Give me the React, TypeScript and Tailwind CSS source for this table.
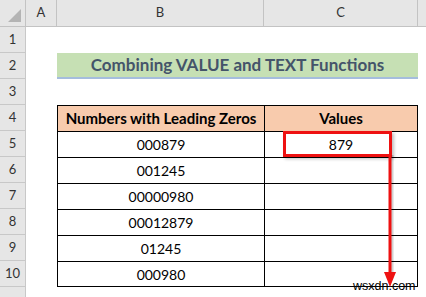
import React from "react";

const rows = [1, 2, 3, 4, 5, 6, 7, 8, 9, 10, 11];
const data = ["000879", "001245", "00000980", "00012879", "01245", "000980"];

export default function App() {
  const font = { fontFamily: "Lato, 'Open Sans', sans-serif" };
  return (
    <div className="relative w-[426px] h-[297px] overflow-hidden bg-white" style={font}>
      <div className="grid grid-cols-[26px_31px_207px_154px_8px] grid-rows-[27px_repeat(11,26px)]">
        {/* header row */}
        <div className="relative bg-[#e6e6e6] border-r border-b border-[#c3c3c3]">
          <div className="absolute right-[4px] bottom-[4px] w-0 h-0 border-l-[13px] border-l-transparent border-b-[13px] border-b-[#b4b4b4]" />
        </div>
        <div className="bg-[#e6e6e6] border-r border-b border-[#c3c3c3] flex items-center justify-center text-[13px] text-[#333]">A</div>
        <div className="bg-[#e6e6e6] border-r border-b border-[#c3c3c3] flex items-center justify-center text-[13px] text-[#333]">B</div>
        <div className="bg-[#e6e6e6] border-r border-b border-[#c3c3c3] flex items-center justify-center text-[13px] text-[#333]">C</div>
        <div className="bg-[#e6e6e6] border-b border-[#c3c3c3]" />

        {rows.map((r) => {
          const rh = (
            <div key={`h${r}`} className="bg-[#e6e6e6] border-r border-b border-[#c8c8c8] flex items-center justify-center text-[13px] text-[#333]">
              {r <= 10 ? r : ""}
            </div>
          );
          const a = <div key={`a${r}`} />;
          const d = <div key={`d${r}`} />;
          let b: React.ReactNode;
          let c: React.ReactNode;
          if (r === 2) {
            b = (
              <div key="title" className="col-span-2 bg-[#c6e0b4] border-b-2 border-[#a5bddd] flex items-center justify-center text-[17px] font-bold text-[#44546a]">
                Combining VALUE and TEXT Functions
              </div>
            );
            c = null;
          } else if (r === 4) {
            b = (
              <div key="b4" className="bg-[#f8cbad] border-l border-t border-black flex items-center justify-center text-[15px] font-bold text-black">
                Numbers with Leading Zeros
              </div>
            );
            c = (
              <div key="c4" className="bg-[#f8cbad] border-l border-t border-r border-black flex items-center justify-center text-[15px] font-bold text-black">
                Values
              </div>
            );
          } else if (r >= 5 && r <= 10) {
            const last = r === 10 ? " border-b" : "";
            b = (
              <div key={`b${r}`} className={"border-l border-t border-black flex items-center justify-center text-[14px] text-black" + last}>
                {data[r - 5]}
              </div>
            );
            c = (
              <div key={`c${r}`} className={"border-l border-t border-r border-black flex items-center justify-center text-[14px] text-black" + last}>
                {r === 5 ? "879" : ""}
              </div>
            );
          } else {
            b = <div key={`b${r}`} />;
            c = <div key={`c${r}`} />;
          }
          return (
            <React.Fragment key={r}>
              {rh}
              {a}
              {b}
              {c}
              {d}
            </React.Fragment>
          );
        })}
      </div>

      {/* red highlight box */}
      <div className="absolute left-[283px] top-[131px] w-[109px] h-[26px] border-[3px] border-[#ee1111] shadow-[2px_2px_3px_rgba(0,0,0,0.25)]" />

      {/* arrow */}
      <svg className="absolute left-[380px] top-[150px]" width="24" height="140" viewBox="0 0 24 140">
        <line x1="10" y1="4" x2="10" y2="124" stroke="rgba(0,0,0,0.18)" strokeWidth="3" transform="translate(2,1)" />
        <line x1="10" y1="4" x2="10" y2="124" stroke="#ee1111" strokeWidth="3" />
        <polygon points="4,122 16,122 10,137" fill="#ee1111" />
      </svg>

      <div className="absolute left-[353px] top-[280px] text-[12.5px] leading-none text-black" style={{ fontFamily: "'Liberation Sans', Arial, sans-serif" }}>
        wsxdn.com
      </div>
    </div>
  );
}
